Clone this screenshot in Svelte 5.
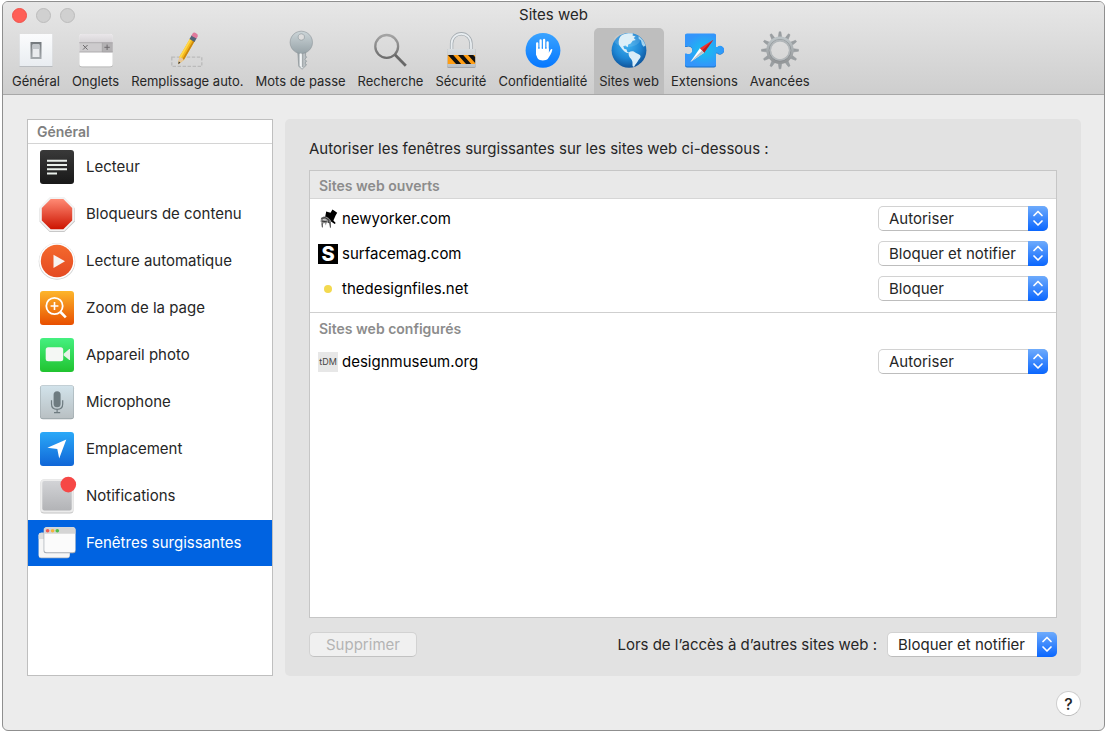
<script>
  const tabs = [
    { icon: "general", label: "Général" },
    { icon: "tabs", label: "Onglets" },
    { icon: "autofill", label: "Remplissage auto." },
    { icon: "passwords", label: "Mots de passe" },
    { icon: "search", label: "Recherche" },
    { icon: "security", label: "Sécurité" },
    { icon: "privacy", label: "Confidentialité" },
    { icon: "websites", label: "Sites web" },
    { icon: "extensions", label: "Extensions" },
    { icon: "advanced", label: "Avancées" },
  ];

  const settings = [
    { icon: "reader", label: "Lecteur" },
    { icon: "blockers", label: "Bloqueurs de contenu" },
    { icon: "autoplay", label: "Lecture automatique" },
    { icon: "zoom", label: "Zoom de la page" },
    { icon: "camera", label: "Appareil photo" },
    { icon: "microphone", label: "Microphone" },
    { icon: "location", label: "Emplacement" },
    { icon: "notifications", label: "Notifications" },
    { icon: "popups", label: "Fenêtres surgissantes" },
  ];

  const choices = ["Bloquer et notifier", "Bloquer", "Autoriser"];

  let activeTab = $state("websites");
  let activeSetting = $state("popups");
  let otherSites = $state("Bloquer et notifier");

  let openSites = $state([
    { name: "newyorker.com", value: "Autoriser" },
    { name: "surfacemag.com", value: "Bloquer et notifier" },
    { name: "thedesignfiles.net", value: "Bloquer" },
  ]);
  let configuredSites = $state([{ name: "designmuseum.org", value: "Autoriser" }]);

  // Angles of the gear teeth
  const teeth = Array.from({ length: 12 }, (_, i) => i * 30);
</script>

{#snippet icon(name)}
  <svg class="icon" viewBox="0 0 40 40" aria-hidden="true">
    {#if name === "general"}
      <rect x="3.5" y="4" width="33" height="33" fill="#b9bcc0" />
      <rect x="3.5" y="4" width="33" height="32" fill="url(#paper)" />
      <rect x="14.5" y="12" width="11" height="17" fill="url(#slot)" />
      <rect x="16.5" y="15" width="7" height="12" fill="#e9ebee" />
      <rect x="16.5" y="14" width="7" height="5" fill="#c2c6ca" />
    {:else if name === "tabs"}
      <rect x="3.3" y="4.5" width="33.4" height="32.8" rx="2.5" fill="#a9a9a9" />
      <rect x="3.3" y="4" width="33.4" height="32.6" rx="2.5" fill="#fff" />
      <path d="M3.3 13V6.5A2.5 2.5 0 0 1 5.8 4h28.4a2.5 2.5 0 0 1 2.5 2.5V13z" fill="url(#bar)" />
      <rect x="3.3" y="12.7" width="33.4" height="9.5" fill="#cdcbcd" />
      <rect x="26.3" y="12.7" width="10.4" height="9.5" fill="#b3b1b3" />
      <path d="M3.3 12.7h33.4M3.3 22h33.4M26.3 12.7V22" stroke="#a09ea0" stroke-width=".7" />
      <path d="M7 15l4.6 4.6M11.6 15L7 19.6M28.4 17.3h5.4M31.1 14.6V20" stroke="#6d6b6d" stroke-width="1" />
    {:else if name === "autofill"}
      <rect x="4.8" y="27.2" width="30" height="9.2" fill="none" stroke="#bababa" stroke-width="1.3" stroke-dasharray="3.4 1.6" />
      <g transform="translate(11.3 34.2) rotate(30)">
        <path d="M0 0l-2.7-6.4V-28.500h5.400v22.100z" fill="#f5b91c" />
        <path d="M-2.700-6.400V-28.500H-.8V-6z" fill="#ffd84a" />
        <path d="M1-6V-28.500h1.700v22.100z" fill="#c98610" />
        <path d="M0 0l-2.700-6.400L0-7.400l2.700 1z" fill="#e8c79a" />
        <path d="M0 0l-1-2.600H1z" fill="#333" />
        <path d="M-2.900-31.800h5.800v4.400h-5.800z" fill="#526478" />
        <path d="M-2.900-31.300h5.800v-2.400a2.900 2 0 0 0-5.800 0z" fill="#e07a9c" />
      </g>
    {:else if name === "passwords"}
      <path d="M16.8 21h7.8v4.8l1 1.4-1.8 2 1.8 2-1.6 1.8 1.5 2-4.4 4.2-3.3-2.8-1-14z" fill="url(#steel)" stroke="#858d91" stroke-width=".6" />
      <path fill-rule="evenodd" d="M20.3 1.2a11.2 11.2 0 1 0 .01 0zM20.3 3.8a3.2 3.2 0 1 1-.01 0z" fill="url(#keyhead)" stroke="#8b9498" stroke-width=".6" />
      <path d="M19.6 23.5V36" stroke="#f4f6f7" stroke-width="1.5" />
      <path d="M21.8 23.5V37" stroke="#7a8185" stroke-width=".8" />
    {:else if name === "search"}
      <circle cx="16.7" cy="16.4" r="11.4" fill="none" stroke="url(#lens)" stroke-width="2.3" />
      <path d="M25 24.8l10.8 11" stroke="#686868" stroke-width="2.8" />
    {:else if name === "security"}
      <path d="M10.6 21v-7.5a9.7 9.7 0 0 1 19.4 0V21" fill="none" stroke="#a6adb2" stroke-width="3.4" />
      <path d="M10.6 21v-7.5a9.7 9.7 0 0 1 19.4 0V21" fill="none" stroke="#e8edf0" stroke-width="1.8" />
      <rect x="6.2" y="19" width="28.4" height="19" rx="1.3" fill="#a2a6aa" />
      <rect x="6.2" y="19" width="28.4" height="18" rx="1.3" fill="url(#steel2)" />
      <rect x="6.7" y="25" width="27.4" height="9" fill="#ff9d12" />
      <path d="M7 25h5.2l8 9H15zM17 25h5.2l8 9H25zM27 25h5.2l1.900 2.100V33z" fill="#111" />
    {:else if name === "privacy"}
      <circle cx="20" cy="20.4" r="17.4" fill="url(#blue)" />
      <path d="M14.2 24.6V13.3M17.6 21V10.4M21.1 21V9.9M24.6 21v-8.5" stroke="#fff" stroke-width="2.3" stroke-linecap="round" />
      <path d="M13.1 18.5h12.7v4.2l1.7-3c.8-1.2 2.1-.8 1.8.4-.8 3.2-2.7 6.4-4.4 8.7-1.5 2-8 2.5-10 0-1.3-1.8-1.8-4.4-1.8-7z" fill="#fff" />
      <path d="M15.9 17v2M19.4 17v2M22.9 17v2" stroke="#2795ff" stroke-width=".8" />
    {:else if name === "websites"}
      <circle cx="20" cy="20.3" r="17.4" fill="url(#ocean)" />
      <path d="M13 5c3-1.6 8-2.2 11-1.6l-.5 2.2 3 .8-1.8 1.6 2 2-3 .8-2 2.6-2.5 1-.5 2.8-2.3-1.6-2.2.7 1.3 2.8 1.9.1 1 2.7 1.7.7-.5.7c-3-.4-5-2.4-6.7-4.6-1-1.6-2.6-2.6-3.1-4.6C9.2 10 10.6 6.5 13 5z" fill="#d9edf8" />
      <path d="M20 22.3c2-1.6 4.6-1.4 6.2.2 1.5 1.3 4.5 1.6 5.4 3.4.2 2-2.2 3.3-2.8 5.3-.9 2.1-2.6 2.6-3.5 5.3-1.4.8-2-.3-1.8-2.2.4-3.3-1-5-2.9-7-.9-1.7-1.3-3.6-.6-5z" fill="#d9edf8" />
      <path d="M29.500 6c3.300 2.300 6 5.600 7 9.400l-1.900 1.300-1.700-2.300-.9-4-2.300-1.700z" fill="#a4d3ef" />
      <ellipse cx="18" cy="10" rx="13" ry="7" fill="#fff" opacity=".12" />
    {:else if name === "extensions"}
      <path d="M3 4h27a2 2 0 0 1 2 2v11.600h1.300a4 4 0 1 1 0 5.800H32V35.500a2 2 0 0 1-2 2H3a2 2 0 0 1-2-2V24h1.500a4 4 0 1 0 0-7H1V6a2 2 0 0 1 2-2z" fill="#176fc4" />
      <path d="M3 3.500h27a2 2 0 0 1 2 2V17h1.300a4 4 0 1 1 0 5.800H32V34.500a2 2 0 0 1-2 2H3a2 2 0 0 1-2-2V23.500h1.500a4 4 0 1 0 0-7H1V5.500a2 2 0 0 1 2-2z" fill="url(#puzzle)" />
      <path d="M29.300 9.700L15.800 18.300l4.300 4.500z" fill="#f0322f" />
      <path d="M29.300 9.700L18 20.500l2.100 2.300z" fill="#b91f20" />
      <path d="M6.400 32L15.800 18.300l4.300 4.500z" fill="#fff" />
      <path d="M6.400 32L18 20.500l2.100 2.300z" fill="#b9c4cc" />
    {:else if name === "advanced"}
      {#each teeth as angle}
        <path d="M18.200 8l.9-6.200h1.800l.9 6.200z" fill="#9a9fa2" stroke="#92979a" stroke-width=".5" transform="rotate({angle} 20 20.3)" />
      {/each}
      <circle cx="20" cy="20.3" r="11.4" fill="none" stroke="url(#gear)" stroke-width="4.600" />
      <circle cx="20" cy="20.3" r="10.900" fill="none" stroke="#83888b" stroke-width=".6" />
      <circle cx="20" cy="20.3" r="9.700" fill="none" stroke="#b2b7ba" stroke-width="1.600" />
    {:else if name === "reader"}
      <rect x="3" y="3" width="34" height="34" rx="3" fill="url(#dark)" />
      <path d="M10 13.7h20M10 18h20M10 22.300h20M10 26.500h10" stroke="#e9efea" stroke-width="1.900" />
    {:else if name === "blockers"}
      <path d="M12.700 4h14.600L38 14.400v13.200L27.300 38H12.700L2.500 27.600V14.400z" fill="#c8c8c8" />
      <path d="M12.700 3h14.600L37.500 13.400v13.200L27.300 37H12.700L2.500 26.600V13.400z" fill="#f3f3f3" />
      <path d="M13.700 5h12.600L35.200 13.900v12.600L26.300 35.300H13.700L4.800 26.500V13.900z" fill="url(#red)" />
    {:else if name === "autoplay"}
      <circle cx="20" cy="20.4" r="18.300" fill="#d2d2d2" />
      <circle cx="20" cy="20" r="17.800" fill="#fff" />
      <circle cx="20" cy="20" r="16.200" fill="url(#orange)" />
      <path d="M16.500 13.700l11.500 6.600-11.500 6.700z" fill="#f7f3f1" />
    {:else if name === "zoom"}
      <rect x="3" y="3" width="34" height="34" rx="3" fill="url(#amber)" />
      <circle cx="17.500" cy="18" r="8.200" fill="none" stroke="#fff" stroke-width="1.800" />
      <path d="M13.600 18h7.800M17.500 14.100v7.800" stroke="#fff" stroke-width="1.600" />
      <path d="M23.500 24l5.300 5.300" stroke="#fff" stroke-width="2.600" />
    {:else if name === "camera"}
      <rect x="3" y="3" width="34" height="34" rx="3" fill="url(#green)" />
      <rect x="8.700" y="12.300" width="17.500" height="14" rx="2.500" fill="#f4f7f4" />
      <path d="M26.700 18.700l5.600-4.700h.7v11h-.7l-5.600-4.500z" fill="#e8f2e9" />
    {:else if name === "microphone"}
      <rect x="3" y="3.300" width="34" height="34" rx="3" fill="#9aa5a9" />
      <rect x="3.500" y="3.500" width="33" height="32.800" rx="2.500" fill="url(#mist)" />
      <rect x="16.600" y="9.300" width="7" height="16" rx="3.500" fill="#6e7b80" />
      <path d="M14.500 18.300v3.800c0 3.500 2.200 5.300 5.600 5.300s5.600-1.800 5.600-5.300v-3.800M20.100 27.500v3M17 30.600h6.200" fill="none" stroke="#6e7b80" stroke-width="1.200" />
    {:else if name === "location"}
      <rect x="3" y="3" width="34" height="34" rx="3" fill="url(#sky)" />
      <path d="M29.300 10.600L22.200 29.500l-1.900-9.400-9.900-1.300z" fill="#fff" />
    {:else if name === "notifications"}
      <rect x="3.500" y="3.500" width="33" height="34" rx="3.500" fill="#c4c4c4" />
      <rect x="3.500" y="3.200" width="33" height="33.300" rx="3.500" fill="#ececec" />
      <rect x="5.300" y="5" width="29.400" height="29.600" rx="2" fill="url(#silver)" />
      <circle cx="31.300" cy="8.600" r="7.800" fill="#f64846" />
    {:else if name === "popups"}
      <rect x="1.700" y="10" width="31" height="25.200" rx="2.500" fill="#a7b3c3" />
      <rect x="1.700" y="9.700" width="31" height="24.800" rx="2.500" fill="#f6f6f6" />
      <path d="M1.700 16v-3.800a2.500 2.500 0 0 1 2.500-2.500H8V16z" fill="#dcdcdc" />
      <rect x="6.600" y="4.300" width="32" height="26" rx="2.500" fill="#a7adb5" />
      <rect x="7.300" y="4.300" width="31" height="25" rx="2.500" fill="#fbfbfb" />
      <path d="M7.300 10.700V6.800a2.500 2.500 0 0 1 2.500-2.500h26a2.500 2.500 0 0 1 2.500 2.500v3.900z" fill="#d4d4d4" />
      <circle cx="10.600" cy="7.700" r="1.800" fill="#ef5b53" />
      <circle cx="15.600" cy="7.700" r="1.800" fill="#f4b43c" />
      <circle cx="20.300" cy="7.700" r="1.800" fill="#4fbf48" />
    {/if}
  </svg>
{/snippet}

{#snippet favicon(name)}
  {#if name === "newyorker.com"}
    <svg class="favicon" viewBox="0 0 20 20" aria-hidden="true">
      <path d="M8.200 2.600l4.300 1.200 2-3.200 4.700 3.100-1.500 2.500-2.300 5.200 2.300 2.500-1 1.200L12.300 12 6.800 9.800z" fill="#000" />
      <path d="M3 9c1.600-1.900 4.800-2.100 7-.6l3 3.200-.4 7.800-1.200-5-2.600-1.200-1 3.300-.8-2.600-2 .6-1 4.300-.4-5-1-1z" fill="#8a8a8a" />
      <path d="M3.400 9.400L7 8.600l4 2.600-.6 2.600M4 12.200l4.800.6M11.800 13l.6 5.600M4 14.400l.4 4" stroke="#222" stroke-width=".8" fill="none" />
      <path d="M5 10.600l3.400.4" stroke="#eee" stroke-width=".8" />
    </svg>
  {:else if name === "surfacemag.com"}
    <span class="favicon letter" aria-hidden="true">S</span>
  {:else if name === "thedesignfiles.net"}
    <svg class="favicon" viewBox="0 0 20 20" aria-hidden="true">
      <circle cx="10" cy="10" r="4" fill="#f3d94f" />
    </svg>
  {:else}
    <span class="favicon initials" aria-hidden="true">tDM</span>
  {/if}
{/snippet}

{#snippet arrows()}
  <svg class="arrows" viewBox="0 0 20 25" aria-hidden="true">
    <path d="M6 9.500l4-4 4 4M6 15l4 4 4-4" fill="none" stroke="#fff" stroke-width="1.700" stroke-linecap="round" stroke-linejoin="round" />
  </svg>
{/snippet}

{#snippet siteRows(sites)}
  <ul class="sites">
    {#each sites as site}
      <li>
        {@render favicon(site.name)}
        <label for={site.name}>{site.name}</label>
        <span class="popup">
          <select id={site.name} bind:value={site.value}>
            {#each choices as choice}
              <option>{choice}</option>
            {/each}
          </select>
          {@render arrows()}
        </span>
      </li>
    {/each}
  </ul>
{/snippet}

<!-- Gradients shared by the icons -->
<svg class="defs" aria-hidden="true">
  <defs>
    <linearGradient id="paper" x2="0" y2="1"><stop stop-color="#fbfcfd" /><stop offset="1" stop-color="#e9edf1" /></linearGradient>
    <linearGradient id="slot" x2="0" y2="1"><stop stop-color="#73787c" /><stop offset="1" stop-color="#a5aaae" /></linearGradient>
    <linearGradient id="bar" x2="0" y2="1"><stop stop-color="#eae7ea" /><stop offset="1" stop-color="#d5d2d5" /></linearGradient>
    <linearGradient id="steel"><stop stop-color="#929b9f" /><stop offset=".4" stop-color="#e6eaec" /><stop offset="1" stop-color="#a1a9ad" /></linearGradient>
    <linearGradient id="keyhead" x2="0" y2="1"><stop stop-color="#ccd5d8" /><stop offset="1" stop-color="#97a3a8" /></linearGradient>
    <linearGradient id="lens" x2="0" y2="1"><stop stop-color="#a4a4a4" /><stop offset="1" stop-color="#6d6d6d" /></linearGradient>
    <linearGradient id="steel2" x2="0" y2="1"><stop stop-color="#d9dddf" /><stop offset="1" stop-color="#bcc1c5" /></linearGradient>
    <linearGradient id="blue" x2="0" y2="1"><stop stop-color="#3aa3ff" /><stop offset="1" stop-color="#0577ff" /></linearGradient>
    <radialGradient id="ocean" cx=".45" cy=".35" r=".65"><stop stop-color="#3fb2f1" /><stop offset=".6" stop-color="#1e86d4" /><stop offset="1" stop-color="#0f559c" /></radialGradient>
    <radialGradient id="puzzle"><stop stop-color="#15c3ee" /><stop offset="1" stop-color="#3395fb" /></radialGradient>
    <linearGradient id="gear" x2="0" y2="1"><stop stop-color="#bcc3c6" /><stop offset="1" stop-color="#949799" /></linearGradient>
    <linearGradient id="dark" x2="0" y2="1"><stop stop-color="#393939" /><stop offset="1" stop-color="#181818" /></linearGradient>
    <linearGradient id="red" x2="0" y2="1"><stop stop-color="#ff8a74" /><stop offset="1" stop-color="#cc1400" /></linearGradient>
    <linearGradient id="orange" x2="0" y2="1"><stop stop-color="#f4692d" /><stop offset="1" stop-color="#e44a22" /></linearGradient>
    <linearGradient id="amber" x2="0" y2="1"><stop stop-color="#fdb62b" /><stop offset="1" stop-color="#e84e00" /></linearGradient>
    <linearGradient id="green" x2="0" y2="1"><stop stop-color="#45f080" /><stop offset="1" stop-color="#20c32f" /></linearGradient>
    <linearGradient id="mist" x2="0" y2="1"><stop stop-color="#d2e3eb" /><stop offset="1" stop-color="#b9c0c3" /></linearGradient>
    <linearGradient id="sky" x2="0" y2="1"><stop stop-color="#2ba9f8" /><stop offset="1" stop-color="#1066d7" /></linearGradient>
    <linearGradient id="silver" x2="0" y2="1"><stop stop-color="#d2d3d6" /><stop offset="1" stop-color="#b2b3b6" /></linearGradient>
  </defs>
</svg>

<div class="window">
  <header>
    <div class="titlebar">
      <div class="lights">
        <button class="close" aria-label="Fermer"></button>
        <button aria-label="Réduire" disabled></button>
        <button aria-label="Agrandir" disabled></button>
      </div>
      <h1>Sites web</h1>
    </div>
    <nav class="toolbar">
      {#each tabs as tab}
        <button class:active={activeTab === tab.icon} onclick={() => (activeTab = tab.icon)}>
          {@render icon(tab.icon)}
          <span>{tab.label}</span>
        </button>
      {/each}
    </nav>
  </header>

  <main>
    <aside>
      <h2>Général</h2>
      <ul>
        {#each settings as setting}
          <li>
            <button
              class:selected={activeSetting === setting.icon}
              onclick={() => (activeSetting = setting.icon)}
            >
              {@render icon(setting.icon)}
              <span>{setting.label}</span>
            </button>
          </li>
        {/each}
      </ul>
    </aside>

    <section class="panel">
      <p>Autoriser les fenêtres surgissantes sur les sites web ci-dessous :</p>
      <div class="list">
        <h3 class="shaded">Sites web ouverts</h3>
        {@render siteRows(openSites)}
        <h3 class="divided">Sites web configurés</h3>
        {@render siteRows(configuredSites)}
      </div>
      <div class="actions">
        <button class="remove" disabled>Supprimer</button>
        <label for="other-sites">Lors de l’accès à d’autres sites web :</label>
        <span class="popup">
          <select id="other-sites" bind:value={otherSites}>
            {#each choices as choice}
              <option>{choice}</option>
            {/each}
          </select>
          {@render arrows()}
        </span>
      </div>
    </section>
  </main>

  <footer>
    <button class="help" aria-label="Aide">?</button>
  </footer>
</div>

<style>
  :global(body) {
    background: #fff;
  }

  .defs {
    position: absolute;
    width: 0;
    height: 0;
  }

  .window {
    box-sizing: border-box;
    display: flex;
    flex-direction: column;
    min-height: calc(100vh - 1px);
    margin: 1px 0 0 2px;
    border: 1px solid #8f8f8f;
    border-radius: 6px;
    overflow: hidden;
    background: #ececec;
    color: #262626;
    font-family: Inter, "Liberation Sans", sans-serif;
    font-size: 15px;
    line-height: 20px;
  }

  button,
  select {
    margin: 0;
    font: inherit;
    color: inherit;
  }

  h1,
  h2,
  h3,
  p,
  ul {
    margin: 0;
    padding: 0;
  }

  ul {
    list-style: none;
  }

  header {
    background: linear-gradient(#e7e7e7, #cecece);
    border-bottom: 1px solid #a8a8a8;
  }

  .titlebar {
    display: grid;
    grid-template-columns: 1fr auto 1fr;
    align-items: center;
    height: 26px;
    padding: 0 9px;
  }

  .titlebar h1 {
    font-size: 15px;
    font-weight: 400;
  }

  .lights {
    display: flex;
    gap: 9px;
  }

  .lights button {
    width: 15px;
    height: 15px;
    padding: 0;
    border: 1px solid #bcbcbc;
    border-radius: 50%;
    background: #d0d0d0;
  }

  .lights .close {
    border-color: #f0524b;
    background: #ff5f57;
  }

  .toolbar {
    display: flex;
    gap: 2px;
    padding-left: 4px;
  }

  .toolbar button {
    display: flex;
    flex-direction: column;
    align-items: center;
    gap: 3px;
    padding: 2px 5px 5px;
    border: 0;
    border-radius: 5px 5px 0 0;
    background: none;
    font-size: 13px;
    line-height: 16px;
    white-space: nowrap;
  }

  .toolbar .active {
    background: #bebebe;
  }

  .icon {
    flex: none;
    width: 40px;
    height: 40px;
  }

  main {
    display: flex;
    flex: 1;
    gap: 12px;
    padding: 24px 23px 0 24px;
  }

  aside {
    flex: none;
    box-sizing: border-box;
    width: 246px;
    border: 1px solid #bfbfbf;
    background: #fff;
  }

  aside h2 {
    padding: 2px 9px 1px;
    border-bottom: 1px solid #d4d4d4;
    color: #808080;
    font-size: 14px;
    font-weight: 600;
  }

  aside ul {
    display: grid;
    gap: 1px;
  }

  aside li button {
    display: flex;
    align-items: center;
    gap: 9px;
    width: 100%;
    height: 46px;
    padding: 0 9px;
    border: 0;
    background: none;
    text-align: left;
  }

  aside li .selected {
    background: #0063e1;
    color: #fff;
  }

  .panel {
    flex: 1;
    display: flex;
    flex-direction: column;
    padding: 20px 24px 19px;
    border-radius: 5px;
    background: #e2e2e2;
  }

  .list {
    flex: 1;
    margin: 11px 0 14px;
    border: 1px solid #c6c6c6;
    background: #fff;
  }

  h3 {
    padding: 0 9px;
    color: #8c8c8c;
    font-size: 14px;
    font-weight: 600;
  }

  .shaded {
    padding-top: 3px;
    border-bottom: 1px solid #d6d6d6;
    background: #e9e9e9;
    line-height: 24px;
  }

  .divided {
    margin-top: 6px;
    border-top: 1px solid #cfcfcf;
    line-height: 31px;
  }

  .shaded + :global(.sites) {
    padding-top: 2px;
  }

  .sites li {
    display: flex;
    align-items: center;
    gap: 4px;
    height: 35px;
    padding: 0 8px;
    color: #000;
  }

  .favicon {
    flex: none;
    width: 20px;
    height: 20px;
    text-align: center;
  }

  .letter {
    background: #000;
    color: #fff;
    font-size: 20px;
    font-weight: 800;
  }

  .initials {
    background: #e7e7e7;
    color: #444;
    font-size: 9px;
  }

  .popup {
    position: relative;
    width: 170px;
    margin-left: auto;
    color: #262626;
  }

  .popup select {
    display: block;
    width: 100%;
    height: 25px;
    padding: 0 22px 0 10px;
    border: 1px solid #d2d2d2;
    border-bottom-color: #bdbdbd;
    border-radius: 5px;
    background: #fff;
    appearance: none;
  }

  .arrows {
    position: absolute;
    top: 0;
    right: 0;
    width: 20px;
    height: 25px;
    border-radius: 0 5px 5px 0;
    background: linear-gradient(#6eabfc, #0a66fe);
    pointer-events: none;
  }

  .actions {
    display: flex;
    align-items: center;
  }

  .actions label {
    margin-left: auto;
  }

  .actions .popup {
    margin-left: 10px;
  }

  .remove {
    height: 25px;
    padding: 0 16px;
    border: 1px solid #d2d2d2;
    border-bottom-color: #c2c2c2;
    border-radius: 5px;
    background: #f0f0f0;
    color: #b4b4b4;
  }

  footer {
    display: flex;
    justify-content: flex-end;
    padding: 15px 23px 14px;
  }

  .help {
    width: 25px;
    height: 25px;
    padding: 0;
    border: 1px solid #cecece;
    border-bottom-color: #b8b8b8;
    border-radius: 50%;
    background: #fff;
    font-size: 16px;
    font-weight: 500;
  }
</style>
